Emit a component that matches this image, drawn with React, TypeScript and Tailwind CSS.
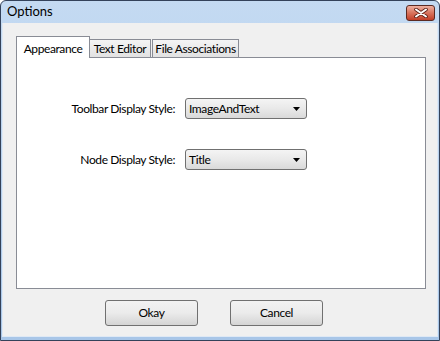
import React from "react";

const font = { fontFamily: "Lato, 'Liberation Sans', sans-serif" };

const CloseGlyph = () => (
  <svg width="14" height="10" viewBox="0 0 14 10">
    <path
      d="M2 1.5 L12 8.5 M12 1.5 L2 8.5"
      stroke="#5a1e14"
      strokeWidth="3.6"
      strokeLinecap="round"
    />
    <path
      d="M2 1.5 L12 8.5 M12 1.5 L2 8.5"
      stroke="#ffffff"
      strokeWidth="2"
      strokeLinecap="round"
    />
  </svg>
);

const Combo = ({ value }: { value: string }) => (
  <div className="flex h-[21px] w-[122px] items-center justify-between rounded-[3px] border border-[#707070] bg-gradient-to-b from-[#f4f4f4] via-[#e9e9e9] to-[#d9d9d9] pl-[3px] pr-[5px] text-[12px] text-black">
    <span>{value}</span>
    <svg width="8" height="4" viewBox="0 0 8 4">
      <path d="M0 0 H7 L3.5 4 Z" fill="#000" />
    </svg>
  </div>
);

const Btn = ({ label }: { label: string }) => (
  <button className="flex h-[26px] w-[93px] items-center justify-center rounded-[3px] border border-[#707070] bg-gradient-to-b from-[#f2f2f2] via-[#ebebeb] to-[#d4d4d4] text-[12px] text-black">
    {label}
  </button>
);

export default function App() {
  return (
    <div
      style={font}
      className="flex h-[341px] w-[440px] flex-col rounded-t-[6px] border border-[#34425a] bg-gradient-to-b from-[#c4daf2] to-[#a8c6e8] tracking-[-0.4px]"
    >
      <div className="flex h-[22px] shrink-0 items-center pl-[6px] pr-[4px]">
        <span className="text-[13px] tracking-normal text-black">Options</span>
        <div className="ml-auto mt-[2px] flex h-[16px] w-[29px] items-center justify-center rounded-[3px] border border-[#5b2a22] bg-gradient-to-b from-[#eeb0a0] via-[#d8735d] to-[#c23d26]">
          <CloseGlyph />
        </div>
      </div>

      <div className="mx-[1px] mb-[3px] flex flex-1 flex-col border-x border-b border-[#dfe9f5] bg-[#f0f0f0] pl-[13px] pr-[11px]">
        <div className="relative z-10 mt-[13px] flex h-[21px] items-end whitespace-nowrap text-[12px] text-black">
          <div className="-mb-px flex h-[22px] w-[74px] items-start justify-center border-x border-t border-[#898c95] bg-white pt-[3px]">
            Appearance
          </div>
          <div className="flex h-[18px] w-[61px] items-center justify-center border-t border-r border-[#898c95] bg-gradient-to-b from-[#f4f4f4] to-[#e2e2e2]">
            Text Editor
          </div>
          <div className="ml-[1px] flex h-[18px] w-[87px] items-center justify-center border-x border-t border-[#898c95] bg-gradient-to-b from-[#f4f4f4] to-[#e2e2e2]">
            File Associations
          </div>
        </div>

        <div className="h-[232px] border border-[#898c95] bg-white">
          <div className="grid grid-cols-[158px_auto] items-center gap-x-[10px] gap-y-[30px] pt-[40px] text-[12px] text-black">
            <span className="text-right">Toolbar Display Style:</span>
            <Combo value="ImageAndText" />
            <span className="text-right">Node Display Style:</span>
            <Combo value="Title" />
          </div>
        </div>

        <div className="mt-[11px] flex gap-[32px] pl-[89px]">
          <Btn label="Okay" />
          <Btn label="Cancel" />
        </div>
      </div>
    </div>
  );
}
